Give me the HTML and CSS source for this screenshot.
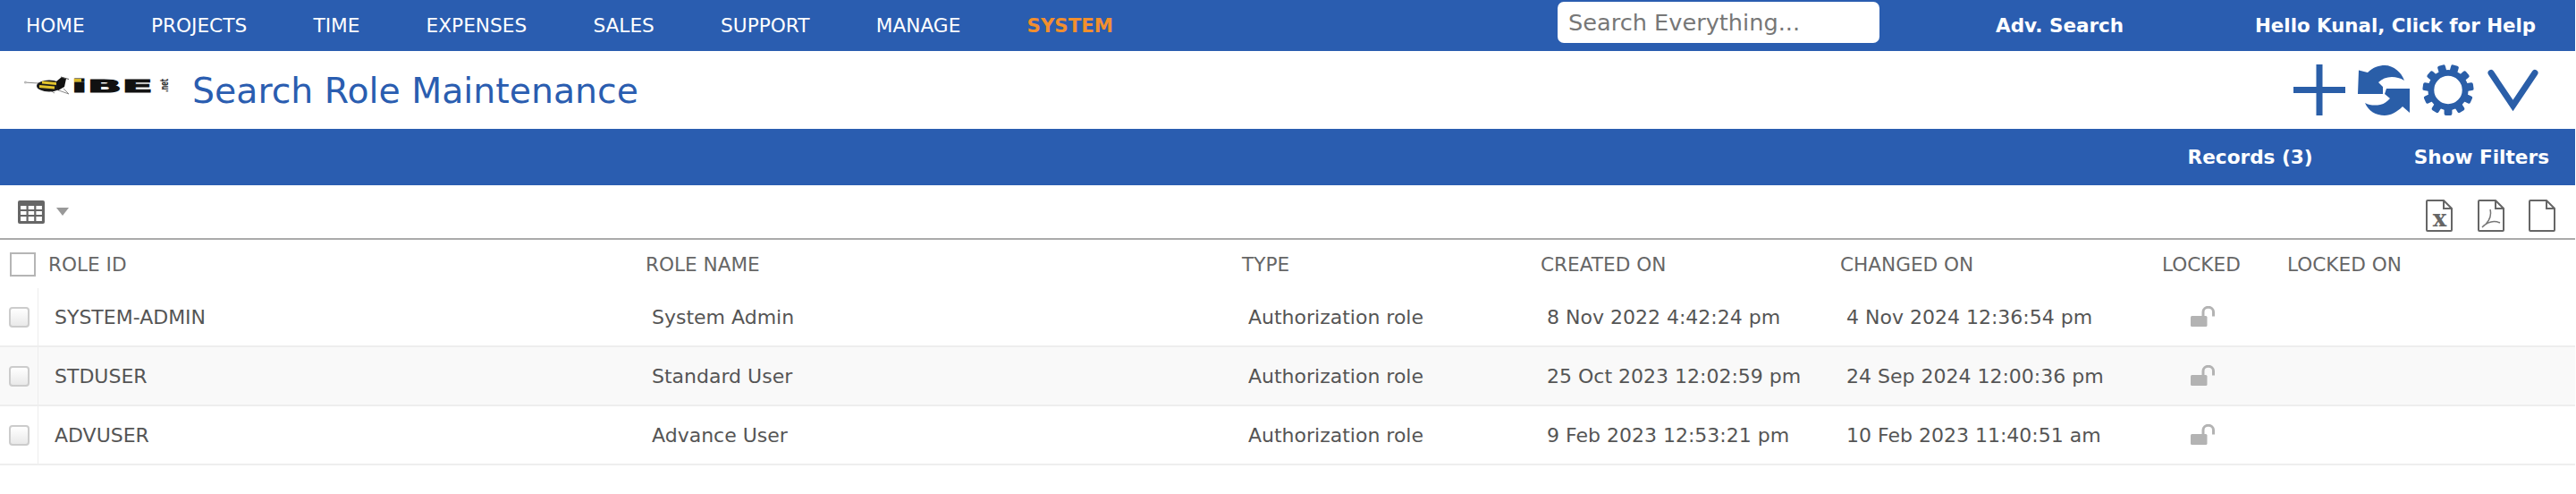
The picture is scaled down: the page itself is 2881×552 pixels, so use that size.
FILE: index.html
```html
<!DOCTYPE html>
<html lang="en">
<head>
<meta charset="utf-8">
<title>Search Role Maintenance</title>
<link rel="stylesheet" href="styles.css">
</head>
<body>
<nav class="nav">
  <ul class="menu">
    <li>HOME</li>
    <li>PROJECTS</li>
    <li>TIME</li>
    <li>EXPENSES</li>
    <li>SALES</li>
    <li>SUPPORT</li>
    <li>MANAGE</li>
    <li class="m-system">SYSTEM</li>
  </ul>
  <input class="search" type="text" placeholder="Search Everything...">
  <a class="adv">Adv. Search</a>
  <a class="hello">Hello Kunal, Click for Help</a>
</nav>
<header class="title-bar">
  <div class="logo">
    <svg class="logo-svg" width="163" height="24" viewBox="0 0 163 24">
      <path d="M0 8 L16 9 M16 9 L50 21 L44 15 M16 9 L34 20" fill="none" stroke="#888" stroke-width="1"/>
      <circle cx="1.500" cy="8" r="1.500" fill="#bbb"/>
      <ellipse cx="28" cy="12" rx="14" ry="6.500" fill="#1a1a1a"/>
      <path d="M20 8 L36 9.500 M17 12.500 L34 14" stroke="#e2c42d" stroke-width="3"/>
      <path d="M36 7 L42 2 L47 4 L45 13 L38 17 Z" fill="#111"/>
      <path d="M41 2 L50 4.500" stroke="#555" stroke-width="1"/>
      <text class="logo-ibe" x="53" y="19" textLength="91" lengthAdjust="spacingAndGlyphs">iBE</text>
      <rect x="56" y="4" width="8" height="3.500" fill="#d9b92a"/>
      <text class="logo-net" transform="translate(161 19) rotate(-90)" textLength="15" lengthAdjust="spacingAndGlyphs">.net</text>
    </svg>
  </div>
  <h1 class="page-title">Search Role Maintenance</h1>
  <div class="actions">
    <svg width="58" height="57" viewBox="0 0 58 57"><path d="M0 25H58V32H0ZM25.500 0H32.500V57H25.500Z" fill="#2a5ea8"/></svg>
    <svg width="58" height="57" viewBox="0 0 58 57"><path d="M1 6.500 L11 9 C17 3 24 1 30 1 C40 1 49 9 52 18 C47 15 43 14 38 14 C32 14 27 16 23 20 L28 25 V33 H0 Z M58 27 V54 L50 47 C44 53 37 57 30 57 C20 57 12 52 8 43 C13 46 20 46 25 45 C30 44 33 41 36 38 L30 33 L32 27 Z" fill="#2a5ea8"/></svg>
    <svg width="58" height="57" viewBox="0 0 58 58"><circle cx="29" cy="29" r="19.500" fill="none" stroke="#2a5ea8" stroke-width="7"/><g fill="#2a5ea8"><rect x="24.500" y="0" width="9" height="10" rx="2" transform="rotate(16.360 29 29)"/><rect x="24.500" y="0" width="9" height="10" rx="2" transform="rotate(49.090 29 29)"/><rect x="24.500" y="0" width="9" height="10" rx="2" transform="rotate(81.820 29 29)"/><rect x="24.500" y="0" width="9" height="10" rx="2" transform="rotate(114.550 29 29)"/><rect x="24.500" y="0" width="9" height="10" rx="2" transform="rotate(147.270 29 29)"/><rect x="24.500" y="0" width="9" height="10" rx="2" transform="rotate(180 29 29)"/><rect x="24.500" y="0" width="9" height="10" rx="2" transform="rotate(212.730 29 29)"/><rect x="24.500" y="0" width="9" height="10" rx="2" transform="rotate(245.450 29 29)"/><rect x="24.500" y="0" width="9" height="10" rx="2" transform="rotate(278.180 29 29)"/><rect x="24.500" y="0" width="9" height="10" rx="2" transform="rotate(310.910 29 29)"/><rect x="24.500" y="0" width="9" height="10" rx="2" transform="rotate(343.640 29 29)"/></g></svg>
    <svg width="58" height="57" viewBox="0 0 58 57"><path d="M5 9.500 L29.500 46 L54 9.500" fill="none" stroke="#2a5ea8" stroke-width="7" stroke-linecap="round" stroke-linejoin="miter"/></svg>
  </div>
</header>
<div class="blue-bar">
  <span class="records">Records (3)</span>
  <span>Show Filters</span>
</div>
<div class="toolbar">
  <svg width="30" height="26" viewBox="0 0 30 26">
    <rect width="30" height="26" rx="2" fill="#666"/>
    <g fill="#fff"><rect x="3" y="6" width="6.500" height="4"/><rect x="11.700" y="6" width="6.500" height="4"/><rect x="20.400" y="6" width="6.500" height="4"/><rect x="3" y="12" width="6.500" height="4"/><rect x="11.700" y="12" width="6.500" height="4"/><rect x="20.400" y="12" width="6.500" height="4"/><rect x="3" y="18" width="6.500" height="5"/><rect x="11.700" y="18" width="6.500" height="5"/><rect x="20.400" y="18" width="6.500" height="5"/></g>
  </svg>
  <svg class="caret" width="14" height="9" viewBox="0 0 14 9"><path d="M0 0H14L7 9Z" fill="#999"/></svg>
  <div class="exports">
    <svg width="30" height="36" viewBox="0 0 30 36"><path d="M1 2 Q1 1 2 1 H20 L29 10 V34 Q29 35 28 35 H2 Q1 35 1 34 Z M20 1 V10 H29" fill="none" stroke="#666" stroke-width="2"/><text class="x-mark" x="15.500" y="30" text-anchor="middle">x</text></svg>
    <svg width="30" height="36" viewBox="0 0 30 36"><path d="M1 2 Q1 1 2 1 H20 L29 10 V34 Q29 35 28 35 H2 Q1 35 1 34 Z M20 1 V10 H29" fill="none" stroke="#666" stroke-width="2"/><path d="M14 11 C16 19 13 25 5 31 C11 25 18 23 25 26" fill="none" stroke="#777" stroke-width="1.500"/></svg>
    <svg width="30" height="36" viewBox="0 0 30 36"><path d="M1 2 Q1 1 2 1 H20 L29 10 V34 Q29 35 28 35 H2 Q1 35 1 34 Z M20 1 V10 H29" fill="none" stroke="#666" stroke-width="2"/></svg>
  </div>
</div>
<div class="grid">
  <div class="row head">
    <div class="c-check"><span class="box-head"></span></div>
    <div>ROLE ID</div><div>ROLE NAME</div><div>TYPE</div><div>CREATED ON</div><div>CHANGED ON</div><div>LOCKED</div><div>LOCKED ON</div>
  </div>
  <div class="row body">
    <div class="c-check"><span class="box"></span></div>
    <div>SYSTEM-ADMIN</div><div>System Admin</div><div>Authorization role</div><div>8 Nov 2022 4:42:24 pm</div><div>4 Nov 2024 12:36:54 pm</div>
    <div><svg class="lock" width="28" height="24" viewBox="0 0 28 24"><use href="#lock-shape"/></svg></div><div></div>
  </div>
  <div class="row body alt">
    <div class="c-check"><span class="box"></span></div>
    <div>STDUSER</div><div>Standard User</div><div>Authorization role</div><div>25 Oct 2023 12:02:59 pm</div><div>24 Sep 2024 12:00:36 pm</div>
    <div><svg class="lock" width="28" height="24" viewBox="0 0 28 24"><use href="#lock-shape"/></svg></div><div></div>
  </div>
  <div class="row body">
    <div class="c-check"><span class="box"></span></div>
    <div>ADVUSER</div><div>Advance User</div><div>Authorization role</div><div>9 Feb 2023 12:53:21 pm</div><div>10 Feb 2023 11:40:51 am</div>
    <div><svg class="lock" width="28" height="24" viewBox="0 0 28 24"><use href="#lock-shape"/></svg></div><div></div>
  </div>
</div>
<svg class="defs" width="0" height="0"><defs><g id="lock-shape"><rect x="0" y="11" width="18.500" height="12" rx="1.500" fill="#b3b3b3"/><path d="M14 11 V6.500 A5.750 5.250 0 0 1 25.500 6.500 V11.500" fill="none" stroke="#b3b3b3" stroke-width="3"/></g></defs></svg>
</body>
</html>
```
FILE: styles.css
```css
* { box-sizing: border-box; }
html, body { margin: 0; padding: 0; background: #fff; }
body { width: 2880px; height: 552px; overflow: hidden; font-family: "DejaVu Sans", Verdana, sans-serif; color: #555; }
.nav { height: 57px; background: #2a5db0; display: flex; align-items: center; color: #fff; }
.menu { list-style: none; margin: 0; padding: 0 0 0 29px; display: flex; gap: 74.200px; font-size: 21.670px; width: 1742px; flex: none; }
.m-system { font-weight: 700; font-size: 21.330px; color: #f28f2e; }
.search { width: 360px; height: 46px; border: 0; border-radius: 7px; padding: 0 12px; font: 25.6px "DejaVu Sans", sans-serif; background: #fff; flex: none; align-self: flex-start; margin-top: 2px; }
.search::placeholder { color: #777; opacity: 1; }
.adv { margin-left: 130px; font-weight: 700; font-size: 21.500px; width: 290px; flex: none; }
.hello { font-weight: 700; font-size: 21.330px; }
.title-bar { height: 87px; display: flex; align-items: center; padding-left: 27px; }
.logo { width: 188px; flex: none; height: 24px; margin-top: -10px; }
.logo-svg { overflow: visible; }
.logo-ibe { font: 700 20px "DejaVu Sans", sans-serif; fill: #111; stroke: #111; stroke-width: 1px; }
.logo-net { font: 700 12px "DejaVu Sans", sans-serif; fill: #333; }
.page-title { margin: 0; font-weight: 400; font-size: 39.400px; color: #2a5db0; }
.actions { margin-left: auto; display: flex; gap: 14px; padding-right: 41px; }
.blue-bar { height: 63px; background: #2a5db0; color: #fff; font-weight: 700; font-size: 21.600px; display: flex; align-items: center; justify-content: flex-end; padding-right: 29px; }
.records { margin-right: 113px; }
.toolbar { height: 61px; border-bottom: 2px solid #aaa; display: flex; align-items: center; padding-left: 20px; }
.caret { margin-left: 13px; }
.exports { margin-left: auto; display: flex; gap: 27.500px; padding-right: 22px; margin-top: 8px; }
.x-mark { font: 700 26px "DejaVu Serif", serif; fill: #666; }
.grid { font-size: 21.600px; }
.row { display: grid; grid-template-columns: 54px 668px 667px 334px 335px 360px 140px 1fr; align-items: center; }
.head { height: 54px; color: #666; }
.body { height: 66px; border-bottom: 2px solid #eee; color: #555; font-size: 22px; }
.body > div { padding-left: 7px; }
.body > .c-check { padding-left: 0; position: relative; }
.body > .c-check::after { content: ""; position: absolute; left: 42px; top: 0; bottom: 0; width: 1px; background: #eee; }
.alt { background: #f9f9f9; }
.c-check { display: flex; align-items: center; height: 100%; }
.box-head { width: 29px; height: 27px; border: 2px solid #b5b5b5; margin-left: 11px; }
.box { width: 23px; height: 23px; border: 2px solid #ccc; border-radius: 4px; margin-left: 10px; background: linear-gradient(#fff, #e9e9e9); }
.lock { display: block; margin-left: 25px; }
.defs { position: absolute; }
```
